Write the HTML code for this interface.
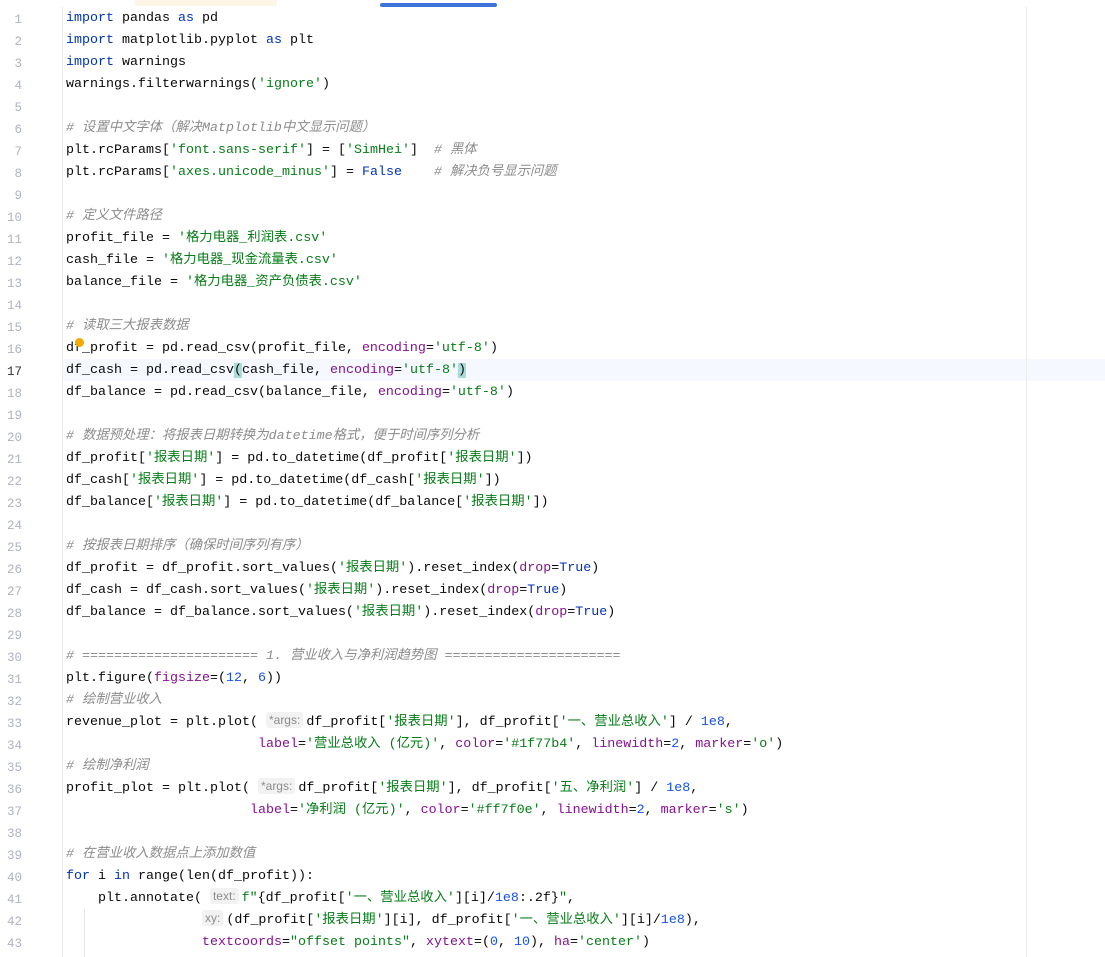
<!DOCTYPE html>
<html><head><meta charset="utf-8"><style>
html,body{margin:0;padding:0;background:#fff;width:1105px;height:957px;overflow:hidden;position:relative}
.tab{position:absolute;left:135px;top:0;width:142px;height:6px;background:#fdf6e6}
.bar{position:absolute;left:380px;top:3px;width:117px;height:4px;background:#3d74d9;border-radius:2px}
.gut{position:absolute;left:62px;top:7px;width:1px;height:950px;background:#ebebeb}
.rline{position:absolute;left:1026px;top:7px;width:1px;height:950px;background:#ebebeb}
.hl{position:absolute;left:63px;top:359px;width:1042px;height:22px;background:#f5f8fe}
.guide{position:absolute;left:84px;top:909px;width:1px;height:48px;background:#e6e6e6}
.nums{position:absolute;left:0;top:9px;width:50px;font:12.5px/22px "Liberation Mono",monospace;color:#aeb3c2;text-align:right}
.nums div{width:22px;height:22px}
.code{position:absolute;left:66px;top:8px;font:13.33px/22px "Liberation Mono","Noto Sans CJK SC",monospace;color:#080808}
.code div{height:22px;white-space:pre}
.k{color:#0033b3}.s{color:#067d17}.p{color:#871094}.n{color:#1750eb}
.c{color:#8c8c8c;font-style:italic}
.h{display:inline-block;font:12px/16px "Liberation Sans",sans-serif;color:#8c8c8c;background:#f2f2f2;border-radius:3px;padding:0 3px;margin-right:3px;vertical-align:1px;font-style:normal}
.br{background:#a8dcd9}
.dot{position:absolute;left:75px;top:338px;width:9px;height:9px;border-radius:50%;background:#f2a900}
</style></head><body>
<div class="tab"></div><div class="bar"></div>
<div class="hl"></div>
<div class="gut"></div><div class="rline"></div><div class="guide"></div>
<div class="nums"><div>1</div><div>2</div><div>3</div><div>4</div><div>5</div><div>6</div><div>7</div><div>8</div><div>9</div><div>10</div><div>11</div><div>12</div><div>13</div><div>14</div><div>15</div><div>16</div><div style="color:#333">17</div><div>18</div><div>19</div><div>20</div><div>21</div><div>22</div><div>23</div><div>24</div><div>25</div><div>26</div><div>27</div><div>28</div><div>29</div><div>30</div><div>31</div><div>32</div><div>33</div><div>34</div><div>35</div><div>36</div><div>37</div><div>38</div><div>39</div><div>40</div><div>41</div><div>42</div><div>43</div></div>
<div class="code"><div><span class="k">import</span> pandas <span class="k">as</span> pd</div><div><span class="k">import</span> matplotlib.pyplot <span class="k">as</span> plt</div><div><span class="k">import</span> warnings</div><div>warnings.filterwarnings(<span class="s">'ignore'</span>)</div><div></div><div class="c"># 设置中文字体（解决Matplotlib中文显示问题）</div><div>plt.rcParams[<span class="s">'font.sans-serif'</span>] = [<span class="s">'SimHei'</span>]  <span class="c"># 黑体</span></div><div>plt.rcParams[<span class="s">'axes.unicode_minus'</span>] = <span class="k">False</span>    <span class="c"># 解决负号显示问题</span></div><div></div><div class="c"># 定义文件路径</div><div>profit_file = <span class="s">'格力电器_利润表.csv'</span></div><div>cash_file = <span class="s">'格力电器_现金流量表.csv'</span></div><div>balance_file = <span class="s">'格力电器_资产负债表.csv'</span></div><div></div><div class="c"># 读取三大报表数据</div><div>df_profit = pd.read_csv(profit_file, <span class="p">encoding</span>=<span class="s">'utf-8'</span>)</div><div>df_cash = pd.read_csv<span class="br">(</span>cash_file, <span class="p">encoding</span>=<span class="s">'utf-8'</span><span class="br">)</span></div><div>df_balance = pd.read_csv(balance_file, <span class="p">encoding</span>=<span class="s">'utf-8'</span>)</div><div></div><div class="c"># 数据预处理：将报表日期转换为datetime格式，便于时间序列分析</div><div>df_profit[<span class="s">'报表日期'</span>] = pd.to_datetime(df_profit[<span class="s">'报表日期'</span>])</div><div>df_cash[<span class="s">'报表日期'</span>] = pd.to_datetime(df_cash[<span class="s">'报表日期'</span>])</div><div>df_balance[<span class="s">'报表日期'</span>] = pd.to_datetime(df_balance[<span class="s">'报表日期'</span>])</div><div></div><div class="c"># 按报表日期排序（确保时间序列有序）</div><div>df_profit = df_profit.sort_values(<span class="s">'报表日期'</span>).reset_index(<span class="p">drop</span>=<span class="k">True</span>)</div><div>df_cash = df_cash.sort_values(<span class="s">'报表日期'</span>).reset_index(<span class="p">drop</span>=<span class="k">True</span>)</div><div>df_balance = df_balance.sort_values(<span class="s">'报表日期'</span>).reset_index(<span class="p">drop</span>=<span class="k">True</span>)</div><div></div><div class="c"># ====================== 1. 营业收入与净利润趋势图 ======================</div><div>plt.figure(<span class="p">figsize</span>=(<span class="n">12</span>, <span class="n">6</span>))</div><div class="c"># 绘制营业收入</div><div>revenue_plot = plt.plot( <span class="h">*args:</span>df_profit[<span class="s">'报表日期'</span>], df_profit[<span class="s">'一、营业总收入'</span>] / <span class="n">1e8</span>,</div><div>                        <span class="p">label</span>=<span class="s">'营业总收入 (亿元)'</span>, <span class="p">color</span>=<span class="s">'#1f77b4'</span>, <span class="p">linewidth</span>=<span class="n">2</span>, <span class="p">marker</span>=<span class="s">'o'</span>)</div><div class="c"># 绘制净利润</div><div>profit_plot = plt.plot( <span class="h">*args:</span>df_profit[<span class="s">'报表日期'</span>], df_profit[<span class="s">'五、净利润'</span>] / <span class="n">1e8</span>,</div><div>                       <span class="p">label</span>=<span class="s">'净利润 (亿元)'</span>, <span class="p">color</span>=<span class="s">'#ff7f0e'</span>, <span class="p">linewidth</span>=<span class="n">2</span>, <span class="p">marker</span>=<span class="s">'s'</span>)</div><div></div><div class="c"># 在营业收入数据点上添加数值</div><div><span class="k">for</span> i <span class="k">in</span> range(len(df_profit)):</div><div>    plt.annotate( <span class="h">text:</span><span class="s">f"</span>{df_profit[<span class="s">'一、营业总收入'</span>][i]/<span class="n">1e8</span>:.2f}<span class="s">"</span>,</div><div>                 <span class="h">xy:</span>(df_profit[<span class="s">'报表日期'</span>][i], df_profit[<span class="s">'一、营业总收入'</span>][i]/<span class="n">1e8</span>),</div><div>                 <span class="p">textcoords</span>=<span class="s">"offset points"</span>, <span class="p">xytext</span>=(<span class="n">0</span>, <span class="n">10</span>), <span class="p">ha</span>=<span class="s">'center'</span>)</div></div>
<div class="dot"></div>
</body></html>
